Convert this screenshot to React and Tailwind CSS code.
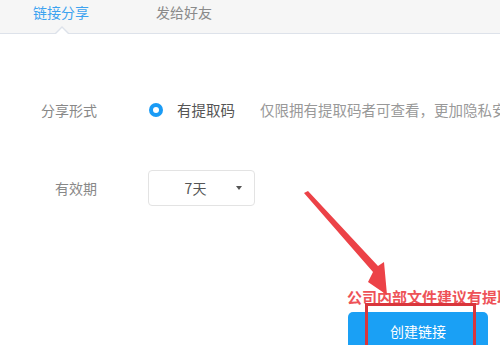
import React from "react";

export default function App() {
  const font = { fontFamily: '"Noto Sans CJK SC", "Noto Sans", sans-serif' };
  return (
    <div className="relative w-[500px] h-[345px] overflow-hidden bg-white" style={font}>
      {/* header tabs */}
      <div className="relative h-[34px] bg-[#f6f6f6] border-b border-[#dde2ea] flex items-start">
        <div className="ml-[33px] mt-[2px] text-[14px] leading-[20px] text-[#3da3f0] whitespace-nowrap">链接分享</div>
        <div className="ml-[67px] mt-[2px] text-[14px] leading-[20px] text-[#8a8a8a] whitespace-nowrap">发给好友</div>
        <div className="absolute left-[54px] top-[26px] w-0 h-0 border-l-[8px] border-r-[8px] border-b-[8px] border-l-transparent border-r-transparent border-b-[#dde2ea]"></div>
        <div className="absolute left-[55px] top-[28px] w-0 h-0 border-l-[7px] border-r-[7px] border-b-[7px] border-l-transparent border-r-transparent border-b-white"></div>
      </div>

      {/* row 1 */}
      <div className="flex items-center mt-[66px] h-[20px] whitespace-nowrap">
        <div className="w-[97px] shrink-0 text-right text-[14px] text-[#888]">分享形式</div>
        <div className="ml-[52px] shrink-0 w-[14px] h-[14px] rounded-full bg-[#1a9bf5] flex items-center justify-center">
          <div className="w-[6px] h-[6px] rounded-full bg-white"></div>
        </div>
        <div className="ml-[14px] shrink-0 text-[14.5px] text-[#555]">有提取码</div>
        <div className="ml-[25px] shrink-0 text-[14.5px] text-[#999]">仅限拥有提取码者可查看，更加隐私安全</div>
      </div>

      {/* row 2 */}
      <div className="flex items-center mt-[50px] whitespace-nowrap">
        <div className="w-[97px] shrink-0 text-right text-[14px] text-[#888]">有效期</div>
        <div className="ml-[51px] shrink-0 w-[107px] h-[36px] border border-[#e3e3e3] rounded-[4px] flex items-center">
          <div className="flex-1 text-center pl-[6px] text-[14px] text-[#555]">7天</div>
          <div className="mr-[12px] w-0 h-0 border-l-[3px] border-r-[3px] border-t-[4px] border-l-transparent border-r-transparent border-t-[#555]"></div>
        </div>
      </div>

      {/* button */}
      <div className="absolute left-[348px] top-[312px] w-[140px] h-[44px] rounded-[5px] bg-[#1aa0f5] flex items-start justify-center pt-[9px]">
        <span className="text-[14px] text-white whitespace-nowrap">创建链接</span>
      </div>

      {/* annotations */}
      <div className="absolute left-[347px] top-[286px] text-[15px] font-bold text-[#ee5257] whitespace-nowrap">公司内部文件建议有提取码</div>
      <div className="absolute left-[365px] top-[303px] w-[111px] h-[50px] border-[3px] border-[#d9363c]"></div>
      <svg className="absolute left-0 top-0" width="500" height="345">
        <polygon points="304,193 308,191 378,266 384,262 387,295 368,282 373,272" fill="#ec4247" />
      </svg>
    </div>
  );
}
